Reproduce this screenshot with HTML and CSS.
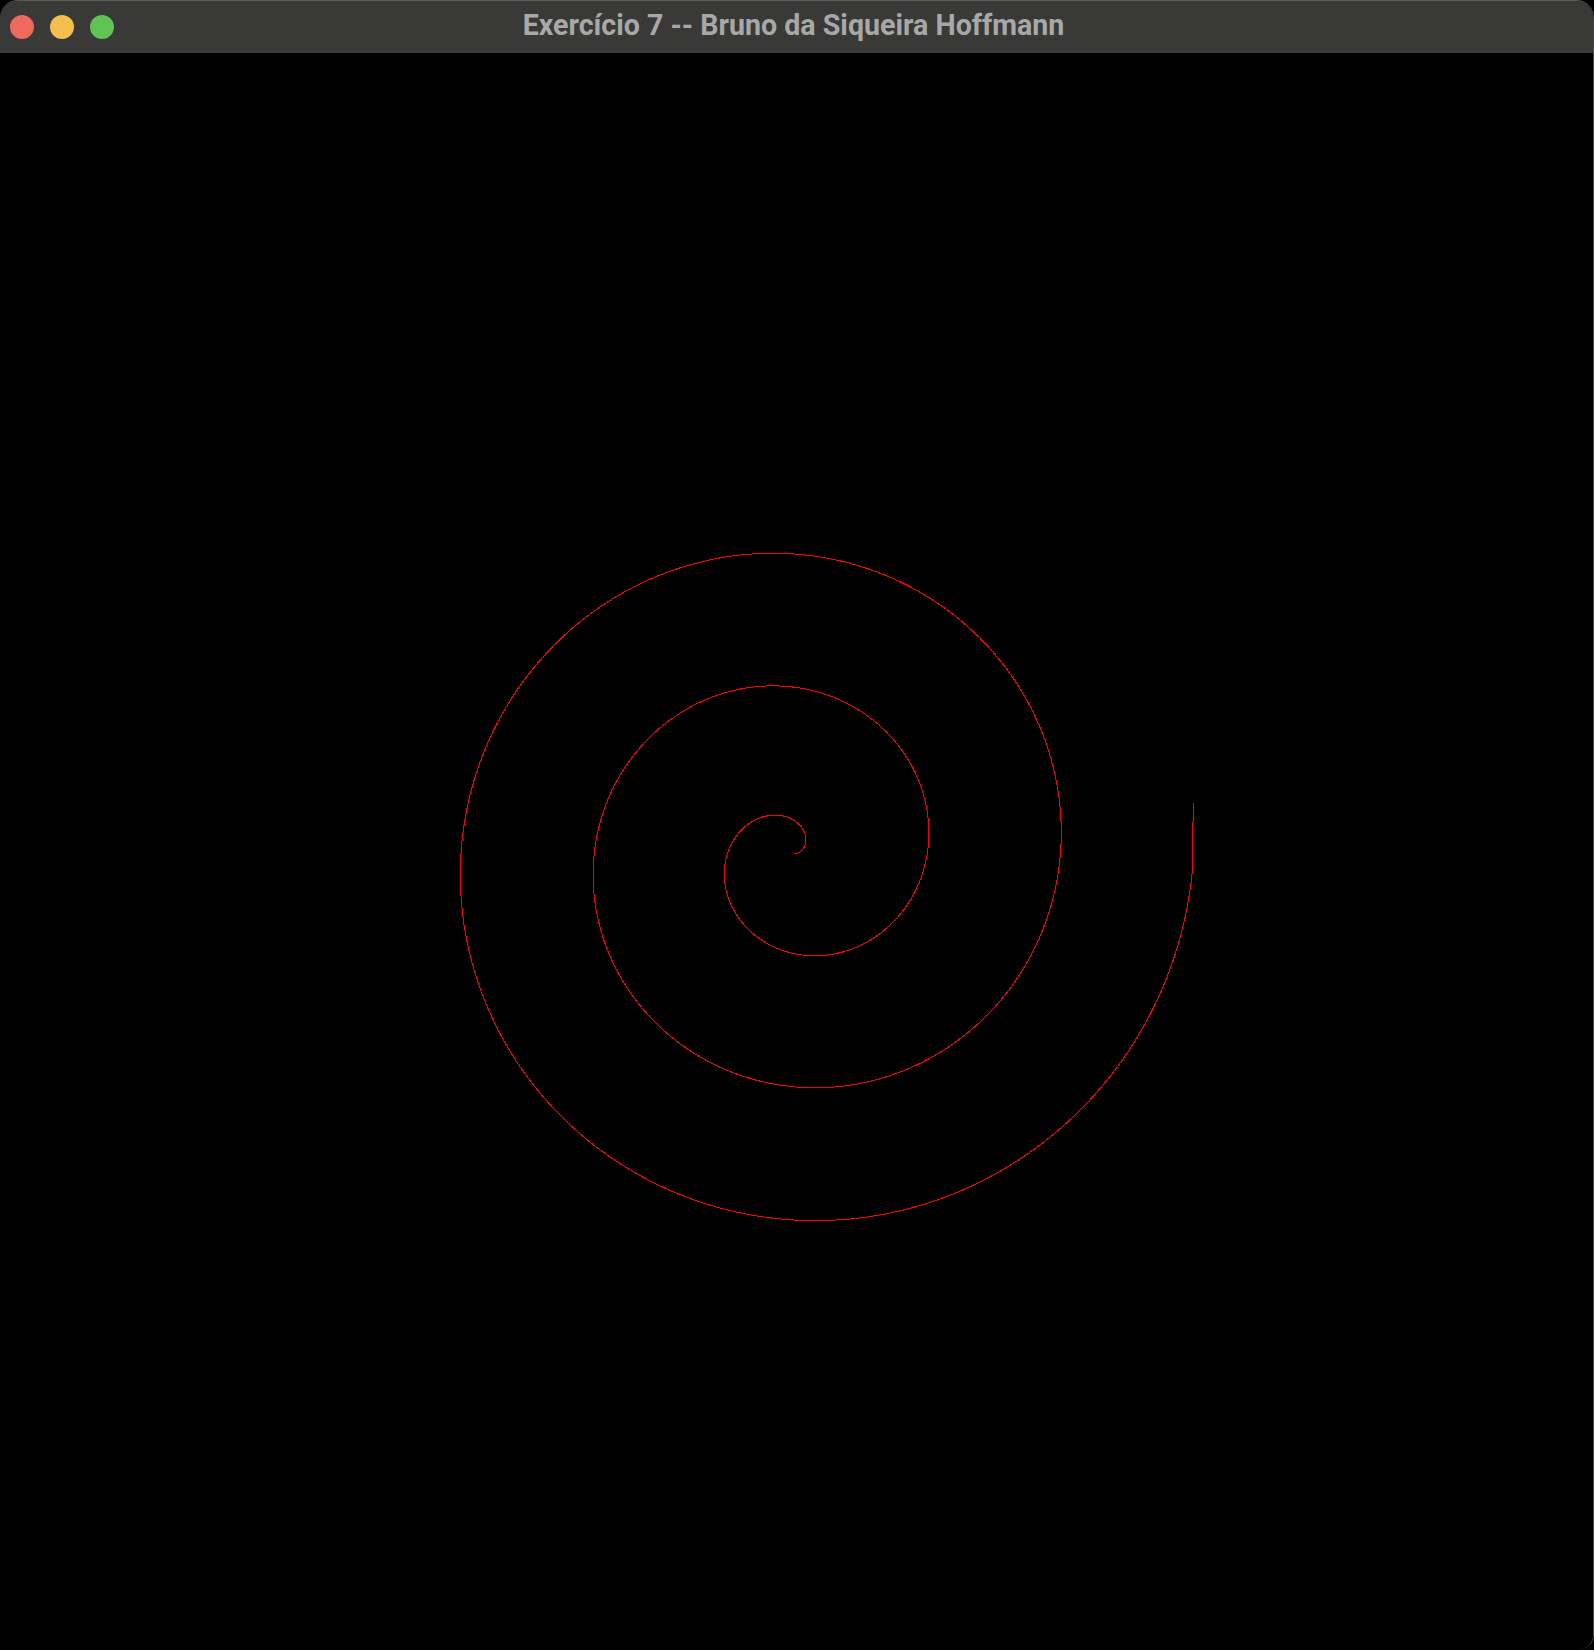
FILE: index.html
```html
<!DOCTYPE html>
<html lang="pt">
<head>
<meta charset="utf-8">
<title>Exercício 7 -- Bruno da Siqueira Hoffmann</title>
<link rel="stylesheet" href="styles.css">
</head>
<body>
<div class="window">
  <header class="titlebar">
    <div class="lights">
      <span class="light light-close"></span>
      <span class="light light-min"></span>
      <span class="light light-max"></span>
    </div>
    <div class="title">Exercício 7 -- Bruno da Siqueira Hoffmann</div>
    <div class="spacer"></div>
  </header>
  <main class="canvas">
    <svg class="spiral-svg" width="1594" height="1597" viewBox="0 0 1594 1597" xmlns="http://www.w3.org/2000/svg">
      <path id="spiral" class="spiral" d=""/>
    </svg>
  </main>
</div>
<script src="spiral.js"></script>
</body>
</html>
```
FILE: styles.css
```css
html, body {
  margin: 0;
  padding: 0;
  background: #000;
}

.window {
  width: 1594px;
  height: 1650px;
  box-sizing: border-box;
  display: flex;
  flex-direction: column;
  border-radius: 18px 18px 16px 16px;
  overflow: hidden;
  background: #000;
  border-right: 1px solid #4a4a4a;
  border-top: 1px solid #5a5a5a;
}

.titlebar {
  height: 52px;
  flex: 0 0 52px;
  background: #393937;
  display: grid;
  grid-template-columns: 1fr auto 1fr;
  align-items: center;
}

.lights {
  display: flex;
  gap: 16px;
  padding-left: 10px;
}

.light {
  width: 24px;
  height: 24px;
  border-radius: 50%;
  display: block;
}

.light-close { background: #ee6a5e; }
.light-min { background: #f5bf4f; }
.light-max { background: #5fc454; }

.title {
  font-family: Roboto, "Liberation Sans", sans-serif;
  font-weight: 700;
  font-size: 28.6px;
  color: #a8a8a8;
  white-space: nowrap;
  line-height: 1;
  padding-bottom: 4px;
  padding-right: 6px;
}

.canvas {
  flex: 1;
  background: #000;
  display: block;
}

.spiral-svg {
  display: block;
}

.spiral {
  fill: none;
  stroke: #ff0000;
  stroke-width: 1;
  shape-rendering: crispEdges;
}
```
FILE: spiral.js
```js
(function () {
  var cx = 794, cy = 800.7, a = 21.2;
  var end = 6 * Math.PI - 0.02;
  var d = "M" + cx + " " + cy;
  for (var t = 0.01; t <= end; t += 0.01) {
    var r = a * t;
    var x = cx + r * Math.cos(t);
    var y = cy - r * Math.sin(t);
    d += " L" + x.toFixed(2) + " " + y.toFixed(2);
  }
  var rEnd = a * end;
  var xe = cx + rEnd * Math.cos(end);
  d += " L" + xe.toFixed(2) + " 749.7";
  document.getElementById("spiral").setAttribute("d", d);
})();
```
